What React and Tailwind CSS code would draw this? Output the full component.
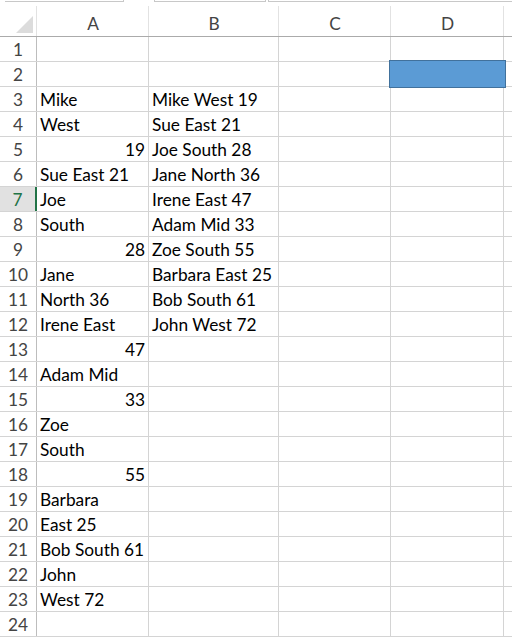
import React from "react";

const A = {
  3: "Mike", 4: "West", 5: ["19"], 6: "Sue East 21", 7: "Joe", 8: "South", 9: ["28"],
  10: "Jane", 11: "North 36", 12: "Irene East", 13: ["47"], 14: "Adam Mid", 15: ["33"],
  16: "Zoe", 17: "South", 18: ["55"], 19: "Barbara", 20: "East 25", 21: "Bob South 61",
  22: "John", 23: "West 72",
};
const B = {
  3: "Mike West 19", 4: "Sue East 21", 5: "Joe South 28", 6: "Jane North 36",
  7: "Irene East 47", 8: "Adam Mid 33", 9: "Zoe South 55", 10: "Barbara East 25",
  11: "Bob South 61", 12: "John West 72",
};

function Cell({ w, value, last }) {
  const isNum = Array.isArray(value);
  const text = isNum ? value[0] : value;
  return (
    <div
      className={`${w} h-full shrink-0 ${last ? "" : "border-r border-[#d4d4d4]"} flex ${isNum ? "justify-end pr-[3px]" : "pl-[3px]"} pt-[2px] leading-[22px] text-black whitespace-nowrap overflow-visible`}
    >
      {text}
    </div>
  );
}

function HeadCell({ w, label, noLine }) {
  return (
    <div className={`${w} h-full shrink-0 relative flex justify-center pt-[13px] leading-[22px] text-[#444]`}>
      {label}
      {!noLine && <div className="absolute right-0 top-[6px] bottom-0 w-px bg-[#e2e2e2]" />}
    </div>
  );
}

export default function App() {
  const rows = Array.from({ length: 24 }, (_, i) => i + 1);
  return (
    <div
      className="relative w-[512px] h-[637px] bg-white overflow-hidden text-[17.3px]"
      style={{ fontFamily: "Lato, 'Liberation Sans', sans-serif" }}
    >
      {/* header row */}
      <div className="flex h-[37px] border-b border-[#ababab]">
        <div className="w-[37px] h-full shrink-0 relative">
          <svg className="absolute left-0 top-0" width="37" height="37">
            <polygon points="33,16 33,33 16,33" fill="#dcdcdc" />
          </svg>
          <div className="absolute right-0 top-[6px] bottom-0 w-px bg-[#e2e2e2]" />
        </div>
        <HeadCell w="w-[112px]" label="A" />
        <HeadCell w="w-[130px]" label="B" />
        <HeadCell w="w-[112px]" label="C" />
        <HeadCell w="w-[113px]" label="D" />
        <HeadCell w="flex-1" label="" noLine />
      </div>

      {rows.map((r) => {
        const sel = r === 7;
        return (
          <div key={r} className="flex h-[25px] border-b border-[#d4d4d4]">
            <div
              className={`w-[37px] h-full shrink-0 flex justify-center pt-[2px] leading-[22px] ${
                sel
                  ? "bg-[#e1e1e1] text-[#217346] border-r-2 border-[#217346]"
                  : "text-[#444] border-r border-[#bdbdbd]"
              }`}
            >
              {r}
            </div>
            <Cell w="w-[112px]" value={A[r] || ""} />
            <Cell w="w-[130px]" value={B[r] || ""} />
            <Cell w="w-[112px]" value="" />
            <Cell w="w-[113px]" value="" />
            <Cell w="flex-1" value="" last />
          </div>
        );
      })}

      {/* top chrome remnants */}
      <div className="absolute left-[5px] top-0 w-[119px] h-[2px] border-b border-r border-[#c8c8c8]" />
      <div className="absolute left-[154px] top-0 w-[112px] h-[2px] border-b border-l border-r border-[#c8c8c8]" />
      <div className="absolute left-[268px] top-0 right-0 h-[2px] border-b border-l border-[#c8c8c8]" />

      {/* blue shape */}
      <div className="absolute left-[389px] top-[60px] w-[117px] h-[28px] bg-[#5b9bd5] border border-[#41719c]" />
    </div>
  );
}
